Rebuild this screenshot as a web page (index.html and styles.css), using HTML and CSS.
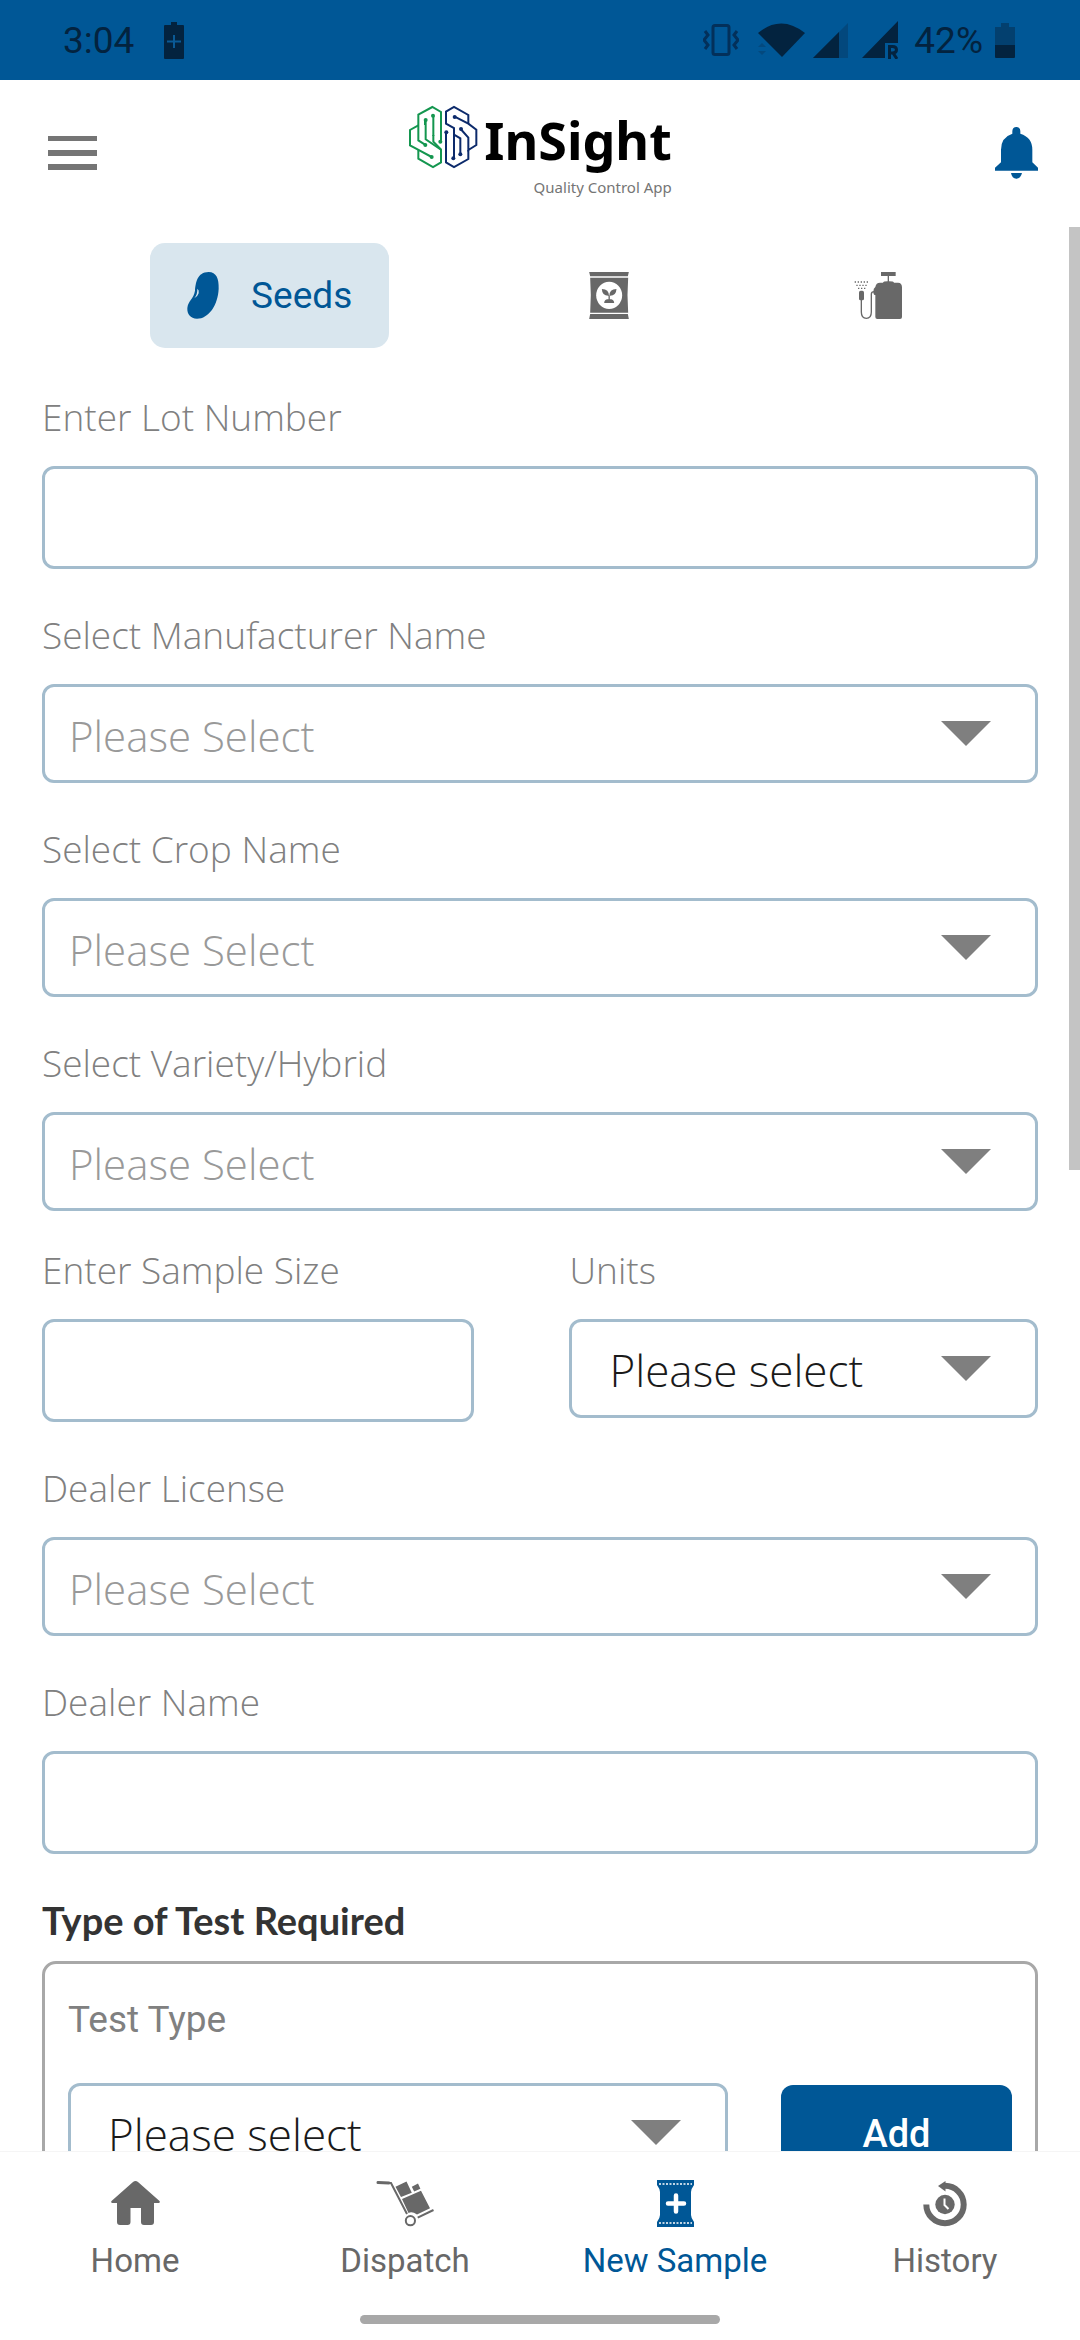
FILE: index.html
```html
<!DOCTYPE html>
<html lang="en">
<head>
    <meta charset="UTF-8">
    <meta name="viewport" content="width=device-width, initial-scale=1.0">
    <title>InSight - New Sample</title>
    <link rel="stylesheet" href="styles.css">
</head>
<body>
<div class="status-bar">
    <div class="status-group">
        <span>3:04</span>
        <svg class="icon-saver" width="20" height="37" viewBox="0 0 20 37">
            <path fill="#03233f" d="M7 0h6v3h6q1 0 1 1v32q0 1-1 1H1q-1 0-1-1V4q0-1 1-1h6z"/>
            <path stroke="#0a5a96" stroke-width="2" d="M10 13v13M3 19.500h14"/>
        </svg>
    </div>
    <div class="status-group">
        <svg width="36" height="32" viewBox="0 0 36 32" fill="none" stroke="#03305a" stroke-width="3">
            <rect x="10" y="1.500" width="16" height="29" rx="2"/>
            <path d="M2 7l3 4-4 5 4 5-3 4M34 7l-3 4 4 5-4 5 3 4"/>
        </svg>
        <svg class="icon-wifi" width="47" height="34" viewBox="0 0 47 34">
            <path fill="#03233f" d="M0 10Q23 -9 47 10L24 34z"/>
            <path fill="#03497e" d="M0 24l4-4 4 4zM0 28h8l-4 4z"/>
        </svg>
        <svg width="35" height="35" viewBox="0 0 35 35">
            <path fill="#03487d" d="M0 35L35 0v35z"/>
            <path fill="#03233f" d="M0 35L26 9v26z"/>
        </svg>
        <svg class="icon-roaming" width="36" height="38" viewBox="0 0 36 38">
            <path fill="#03233f" d="M0 37L36 0v22H23v15z"/>
            <path fill="none" stroke="#03233f" stroke-width="3" d="M27.500 38V25.500h3q4 0 4 3.200t-4 3.200h-3m3.500 0l4 6"/>
        </svg>
        <span>42%</span>
        <svg class="icon-battery" width="20" height="35" viewBox="0 0 20 35">
            <path fill="#03406f" d="M6 0h8v4h6v18H0V4h6z"/>
            <path fill="#03233f" d="M0 22h20v12q0 1-1 1H1q-1 0-1-1z"/>
        </svg>
    </div>
</div>

<header class="app-header">
    <button type="button" class="icon-btn" aria-label="Menu">
        <svg width="49" height="34" viewBox="0 0 49 34" fill="#757575">
            <path d="M0 0h49v5H0zM0 14h49v6H0zM0 28h49v6H0z"/>
        </svg>
    </button>
    <div class="logo">
        <svg width="70" height="64" viewBox="50 45 210 192" fill="none" stroke-width="6">
            <g stroke="#14964f">
                <path d="M149 152V66L123 51 81 74V151L101 164"/>
                <path d="M81 106L56 120V166L80 179 121 201"/>
                <path d="M103 90V148L149 179V217L125 231 81 206V180"/>
                <path d="M126 78V138M101 90V105"/>
                <path d="M126 135V155L149 178"/>
            </g>
            <g fill="#14964f">
                <circle cx="103" cy="90" r="6"/>
                <circle cx="125" cy="77" r="6"/>
                <circle cx="102" cy="165" r="6"/>
                <circle cx="147" cy="155" r="6"/>
                <circle cx="121" cy="201" r="6"/>
            </g>
            <g stroke="#0c2a6b">
                <path d="M164 126V217L188 231 231 207V180"/>
                <path d="M190 80L231 101 255 119V165L231 180V143L208 117"/>
                <path d="M231 101V75L188 51 164 65V101L188 114V205"/>
                <path d="M188 134L207 145V193"/>
            </g>
            <g fill="#0c2a6b">
                <circle cx="190" cy="81" r="6"/>
                <circle cx="165" cy="127" r="6"/>
                <circle cx="209" cy="117" r="6"/>
                <circle cx="207" cy="193" r="6"/>
                <circle cx="186" cy="205" r="6"/>
            </g>
        </svg>
        <div class="logo-text">
            <h1>InSight</h1>
            <p>Quality Control App</p>
        </div>
    </div>
    <button type="button" class="icon-btn" aria-label="Notifications">
        <svg width="43" height="52" viewBox="945 382 129 156" fill="#005796">
            <path d="M997 402V394Q998 382 1009 382T1021 394V402Q1057 413 1057 450V488L1074 504V513H945V504L963 488V450Q963 413 997 402z"/>
            <path d="M993 520H1026Q1022 537 1009 537T993 520z"/>
        </svg>
    </button>
</header>

<main class="content">
    <div class="tabs">
        <button type="button" class="tab active">
            <svg width="32" height="47" viewBox="170 126 96 141">
                <path fill="#005796" d="M235 126C258 126 266 146 265 176C263 225 235 266 200 266C180 266 170 252 171 234C173 212 190 207 194 182C196 160 200 126 235 126z"/>
                <path fill="#d9e6ee" d="M201 176Q207 180 205 190Q202 200 192 205Q202 192 201 176z"/>
            </svg>
            Seeds
        </button>
        <button type="button" class="tab" aria-label="Fertilizers">
            <svg width="40" height="47" viewBox="87 96 119 141">
                <path fill="#686868" d="M87 96H206L203 109H90zM90 113H204Q200 165 204 218H90Q94 165 90 113zM90 222H203L206 237H87z"/>
                <ellipse cx="147" cy="166" rx="39" ry="41" fill="#fff"/>
                <path fill="#686868" d="M125 147Q147 148 146 167Q126 168 125 147zM169 147Q147 148 148 167Q168 168 169 147zM145 164h4v15h-4zM132 189Q132 177 147 177T162 189z"/>
            </svg>
        </button>
        <button type="button" class="tab" aria-label="Pesticides">
            <svg width="48" height="47" viewBox="880 96 144 141">
                <path fill="#686868" d="M961 96h44v12h-20v16q14 0 15 4h12q12 0 12 14v89q0 6-6 6H950q-6 0-6-6v-66q-6 0-6-10t6-14q2-13 14-13h9q1-4 14-4v-16h-20z"/>
                <rect x="895" y="152" width="15" height="29" rx="5" fill="#686868"/>
                <path fill="none" stroke="#686868" stroke-width="4" d="M902 180V216Q902 235 917 235T932 216V162Q932 155 941 155"/>
                <path fill="none" stroke="#686868" stroke-width="4" stroke-dasharray="4 5" d="M882 126h44M887 136h36M892 145h24"/>
            </svg>
        </button>
    </div>

    <form class="sample-form">
        <div class="field">
            <label for="lotNumber">Enter Lot Number</label>
            <input type="text" id="lotNumber">
        </div>
        <div class="field">
            <label for="manufacturer">Select Manufacturer Name</label>
            <div class="select-box">
                <select id="manufacturer" class="placeholder">
                    <option>Please Select</option>
                </select>
            </div>
        </div>
        <div class="field">
            <label for="crop">Select Crop Name</label>
            <div class="select-box">
                <select id="crop" class="placeholder">
                    <option>Please Select</option>
                </select>
            </div>
        </div>
        <div class="field">
            <label for="variety">Select Variety/Hybrid</label>
            <div class="select-box">
                <select id="variety" class="placeholder">
                    <option>Please Select</option>
                </select>
            </div>
        </div>
        <div class="field-row">
            <div class="field">
                <label for="sampleSize">Enter Sample Size</label>
                <input type="text" id="sampleSize">
            </div>
            <div class="field">
                <label for="units">Units</label>
                <div class="select-box">
                    <select id="units">
                        <option>Please select</option>
                    </select>
                </div>
            </div>
        </div>
        <div class="field">
            <label for="license">Dealer License</label>
            <div class="select-box">
                <select id="license" class="placeholder">
                    <option>Please Select</option>
                </select>
            </div>
        </div>
        <div class="field">
            <label for="dealerName">Dealer Name</label>
            <input type="text" id="dealerName">
        </div>

        <h2>Type of Test Required</h2>
        <div class="test-panel">
            <label for="testType">Test Type</label>
            <div class="test-row">
                <div class="select-box">
                    <select id="testType">
                        <option>Please select</option>
                    </select>
                </div>
                <button type="button" class="btn-add">Add</button>
            </div>
        </div>
    </form>
    <div class="scroll-thumb"></div>
</main>

<footer class="bottom-bar">
    <nav class="bottom-nav">
        <a href="#">
            <svg width="49" height="47" viewBox="0 0 49 47" fill="#686868">
                <path d="M22 2q2.500-2 5 0L48.500 21q1 2-1 2H43v19q0 3-3 3h-7q-3 0-3-3V28H19.500v14q0 3-3 3H9q-3 0-3-3V23H1.500q-2 0-1-2z"/>
            </svg>
            Home
        </a>
        <a href="#">
            <svg width="58" height="47" viewBox="0 0 58 47">
                <path fill="#686868" d="M19.500 6.700L30.500 1.500 35.800 12.700 25 17zM35.800 6.700L42 3.500 44.400 8.700 38.200 11.500zM26 19L45 10.700 54 28.300 41 34.500Q36 31 32.500 33z"/>
                <path fill="none" stroke="#686868" stroke-width="2" d="M13 3h2L31 34M41.700 37.700L57.500 30"/>
                <path stroke="#686868" stroke-width="3" stroke-linecap="round" d="M2 2.500L13 3"/>
                <circle cx="34.400" cy="40.700" r="4.600" fill="none" stroke="#686868" stroke-width="2"/>
            </svg>
            Dispatch
        </a>
        <a href="#" class="active">
            <svg width="37" height="47" viewBox="0 0 37 47">
                <path fill="#005796" d="M0 0H37V5Q34 9 34 12V35Q34 38 37 42V47H0V42Q3 38 3 35V12Q3 9 0 5z"/>
                <path stroke="#fff" stroke-width="1.500" stroke-dasharray="2 1.500" d="M2 4h33M2 43h33"/>
                <path stroke="#fff" stroke-width="4.500" stroke-linecap="round" d="M19 15.500v16M11 23.500h16"/>
            </svg>
            New Sample
        </a>
        <a href="#">
            <svg width="44" height="47" viewBox="0 0 44 47">
                <path fill="none" stroke="#686868" stroke-width="6" d="M3.300 24.500A18.700 18.700 0 1 0 22 5.800"/>
                <path fill="#686868" d="M15 6L22.500 1v10.500z"/>
                <circle cx="22" cy="24.500" r="9.700" fill="#686868"/>
                <path fill="none" stroke="#fff" stroke-width="2" d="M21.500 18.500v6.500l4 4"/>
            </svg>
            History
        </a>
    </nav>
    <div class="home-indicator"></div>
</footer>
</body>
</html>
```
FILE: styles.css
```css
* {
    box-sizing: border-box;
}

body {
    margin: 0;
    height: 100vh;
    display: flex;
    flex-direction: column;
    overflow: hidden;
    background-color: white;
    font-family: Roboto, sans-serif;
}

button {
    font-family: Roboto, sans-serif;
    border: none;
    background: none;
    padding: 0;
}

svg {
    display: block;
    flex-shrink: 0;
}

/* status bar */
.status-bar {
    height: 80px;
    padding: 0 65px 0 63px;
    display: flex;
    justify-content: space-between;
    align-items: center;
    background-color: #005796;
    color: #03233f;
    font-size: 37px;
}

.status-group {
    display: flex;
    align-items: center;
}

.icon-saver {
    margin-left: 30px;
}

.icon-wifi {
    margin: 0 8px 0 19px;
}

.icon-roaming {
    margin: 0 16px 0 14px;
}

.icon-battery {
    margin-left: 12px;
}

/* header */
.app-header {
    height: 147px;
    padding: 0 42px 0 48px;
    display: flex;
    justify-content: space-between;
    align-items: center;
}

.icon-btn {
    padding-bottom: 2px;
}

.logo {
    display: flex;
    align-items: flex-start;
    gap: 6px;
    padding: 0 12px 4px 0;
}

.logo-text {
    text-align: right;
}

.logo h1 {
    margin: 0;
    font-family: "Noto Sans", sans-serif;
    font-size: 52px;
    line-height: 70px;
    color: black;
}

.logo p {
    margin: 0;
    font-family: "Noto Sans", sans-serif;
    font-size: 15px;
    line-height: 24px;
    color: #757575;
}

/* content */
.content {
    position: relative;
    flex: 1;
    min-height: 0;
    overflow: hidden;
}

.tabs {
    display: flex;
    justify-content: space-around;
    padding: 16px 68px 0 64px;
}

.tab {
    display: flex;
    justify-content: center;
    align-items: center;
    width: 96px;
    height: 105px;
    border-radius: 15px;
    color: #005796;
    font-size: 37px;
}

.tab.active {
    width: 239px;
    gap: 32px;
    background-color: #d9e6ee;
}

.sample-form {
    padding: 45px 42px 0;
    font-family: "Open Sans", sans-serif;
}

.field {
    margin-bottom: 42px;
}

.field-row {
    display: grid;
    grid-template-columns: 12fr 13fr;
    gap: 95px;
    margin-top: -7px;
}

label {
    display: block;
    font-size: 37px;
    font-weight: 350;
    line-height: 48px;
    color: #808080;
    margin-bottom: 25px;
}

input, select {
    display: block;
    width: 100%;
    border: 3px solid #a3bccd;
    border-radius: 12px;
    background-color: white;
    font-family: inherit;
    font-size: 44px;
    color: #1a1a1a;
}

input {
    height: 103px;
    padding: 0 24px;
}

select {
    height: 99px;
    padding: 3px 90px 0 37px;
    appearance: none;
    font-weight: 350;
}

select.placeholder {
    padding-left: 24px;
    font-size: 42px;
    color: #999;
}

.select-box {
    position: relative;
}

.select-box::after {
    content: "";
    position: absolute;
    top: 37px;
    right: 47px;
    border: 25px solid transparent;
    border-top-color: #7f7f7f;
    border-bottom: none;
    pointer-events: none;
}

h2 {
    margin: 0 0 17px;
    font-family: Lato, sans-serif;
    font-size: 38px;
    line-height: 48px;
    color: #333;
}

.test-panel {
    height: 300px;
    padding: 32px 23px;
    border: 3px solid #a8a8a8;
    border-radius: 14px;
}

.test-panel label {
    font-family: Roboto, sans-serif;
    font-weight: 400;
    margin-bottom: 39px;
}

.test-row {
    display: flex;
    align-items: flex-end;
    gap: 53px;
}

.test-row .select-box {
    flex: 1;
}

.btn-add {
    width: 231px;
    height: 97px;
    border-radius: 12px;
    background-color: #005796;
    color: white;
    font-size: 38px;
    font-weight: 500;
}

.scroll-thumb {
    position: absolute;
    top: 0;
    right: 0;
    width: 11px;
    height: 49%;
    background-color: #c4c4c4;
}

/* bottom navigation */
.bottom-bar {
    height: 189px;
    padding-top: 28px;
    border-top: 1px solid #f5f5f5;
    background-color: white;
}

.bottom-nav {
    display: grid;
    grid-template-columns: repeat(4, 1fr);
}

.bottom-nav a {
    display: flex;
    flex-direction: column;
    align-items: center;
    gap: 14px;
    font-size: 33px;
    line-height: 40px;
    color: #686868;
    text-decoration: none;
}

.bottom-nav a.active {
    color: #005796;
}

.home-indicator {
    width: 360px;
    height: 9px;
    margin: 34px auto 0;
    border-radius: 5px;
    background-color: #a8a8a8;
}
```
